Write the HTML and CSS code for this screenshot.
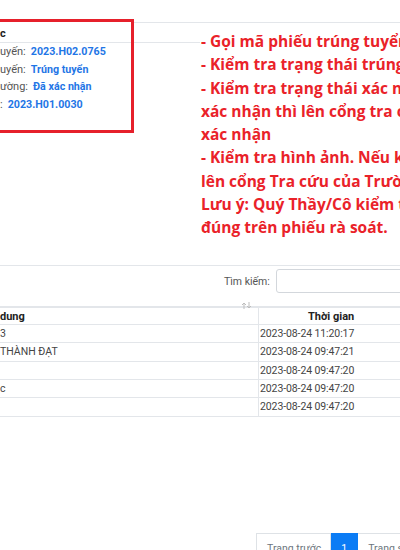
FILE: index.html
```html
<!DOCTYPE html>
<html lang="vi">
<head>
<meta charset="utf-8">
<title>Tra cứu</title>
<link rel="stylesheet" href="styles.css">
</head>
<body>
<div class="page">
  <section class="card">
    <div class="card-head"></div>
    <div class="card-body"></div>
  </section>

  <section class="list">
    <div class="search">
      <label class="search-label" for="q">Tìm kiếm:</label>
      <input class="search-input" id="q" type="text">
    </div>

    <table class="log">
      <thead>
        <tr>
          <th class="c1">dung<span class="sort"><svg width="11" height="7" viewBox="0 0 11 7"><path d="M3 7V1M1 3l2-2 2 2" fill="none" stroke="#bdbdbd" stroke-width="1"/><path d="M8 0v6M6 4l2 2 2-2" fill="none" stroke="#bdbdbd" stroke-width="1"/></svg></span></th>
          <th class="c2">Thời gian</th>
        </tr>
      </thead>
      <tbody>
        <tr><td class="c1">3</td><td class="c2">2023-08-24 11:20:17</td></tr>
        <tr><td class="c1">THÀNH ĐẠT</td><td class="c2">2023-08-24 09:47:21</td></tr>
        <tr><td class="c1"></td><td class="c2">2023-08-24 09:47:20</td></tr>
        <tr><td class="c1">c</td><td class="c2">2023-08-24 09:47:20</td></tr>
        <tr><td class="c1"></td><td class="c2">2023-08-24 09:47:20</td></tr>
      </tbody>
    </table>

    <nav class="pager">
      <span class="page-item">Trang trước</span>
      <span class="page-item active">1</span>
      <span class="page-item">Trang sau</span>
    </nav>
  </section>

  <div class="mark-box">
    <div class="mark-head">c</div>
    <div class="mark-row"><span class="lbl">uyến:</span><span class="val">2023.H02.0765</span></div>
    <div class="mark-row"><span class="lbl">uyến:</span><span class="val">Trúng tuyển</span></div>
    <div class="mark-row"><span class="lbl">ường:</span><span class="val">Đã xác nhận</span></div>
    <div class="mark-row"><span class="lbl">:</span><span class="val">2023.H01.0030</span></div>
  </div>

  <div class="note">
    <p>- Gọi mã phiếu trúng tuyển</p>
    <p>- Kiểm tra trạng thái trúng tuyển</p>
    <p>- Kiểm tra trạng thái xác nhận nhập học. Nếu chưa</p>
    <p>xác nhận thì lên cổng tra cứu để</p>
    <p>xác nhận</p>
    <p>- Kiểm tra hình ảnh. Nếu không có hình thì</p>
    <p>lên cổng Tra cứu của Trường để cập nhật</p>
    <p>Lưu ý: Quý Thầy/Cô kiểm tra kỹ thông tin</p>
    <p>đúng trên phiếu rà soát.</p>
  </div>
</div>
</body>
</html>
```
FILE: styles.css
```css
* { box-sizing: border-box; margin: 0; padding: 0; }
html, body { width: 400px; height: 550px; overflow: hidden; background: #fff; }
body { font-family: Roboto, "Open Sans", sans-serif; font-size: 11px; color: #333; }

.page { position: relative; height: 550px; overflow: hidden; }

.card { margin-top: 22px; border-top: 1px solid #e3e6ea; }
.card-head { height: 20px; border-bottom: 1px solid #e3e6ea; }
.card-body { height: 222px; }

.list { border-top: 1px solid #e3e6ea; }
.search { display: flex; align-items: center; padding: 3px 0 0 224px; gap: 6px; }
.search-label { color: #555; font-size: 10.5px; white-space: nowrap; flex: none; }
.search-input { width: 200px; height: 24px; border: 1px solid #d3d7dc; border-radius: 3px; flex: none; }

.log { margin-top: 13px; border-collapse: separate; border-spacing: 0; width: 460px; table-layout: fixed; }
.log th, .log td { text-align: left; white-space: nowrap; padding: 0; }
.log th { height: 19px; border-top: 2px solid #e3e6ea; border-bottom: 1px solid #e3e6ea; font-weight: 700; color: #222; font-size: 11px; }
.log td { height: 18.33px; border-bottom: 1px solid #e3e6ea; color: #444; font-size: 10.5px; }
.log .c1 { width: 258px; position: relative; }
.log .c2 { border-left: 1px solid #e3e6ea; }
.log td.c2 { padding-left: 1px; letter-spacing: -0.1px; }
.log th.c2 { padding-left: 49px; }
.sort { position: absolute; left: 241px; top: -6px; line-height: 0; }

.pager { display: flex; margin-top: 116px; padding-left: 256px; }
.page-item { height: 30px; line-height: 30px; border: 1px solid #dee2e6; color: #6c757d; padding: 0 9px 0 10px; font-size: 10.5px; white-space: nowrap; flex: none; }
.page-item + .page-item { border-left: 0; }
.page-item.active { background: #0b7cf5; border-color: #0b7cf5; color: #fff; width: 27px; padding: 0; text-align: center; }

.mark-box { position: absolute; left: -20px; top: 19px; width: 154px; height: 114px; border: 3px solid #e6202b; background: #fff; }
.mark-head { height: 21px; line-height: 23px; border-bottom: 1px solid #e3e6ea; padding-left: 17px; font-weight: 700; font-size: 11px; color: #222; }
.mark-row { line-height: 17.7px; padding-left: 17px; font-size: 11px; white-space: nowrap; }
.mark-row:first-of-type { margin-top: 3px; }
.lbl { color: #555; }
.val { color: #1f76e6; font-weight: 700; font-size: 10.7px; margin-left: 5px; }

.note { position: absolute; left: 200px; top: 30px; background: #fff; padding-left: 1px; font-family: "Open Sans", Lato, sans-serif; font-weight: 700; font-size: 15.5px; line-height: 23.3px; color: #ea2229; white-space: nowrap; }
```
